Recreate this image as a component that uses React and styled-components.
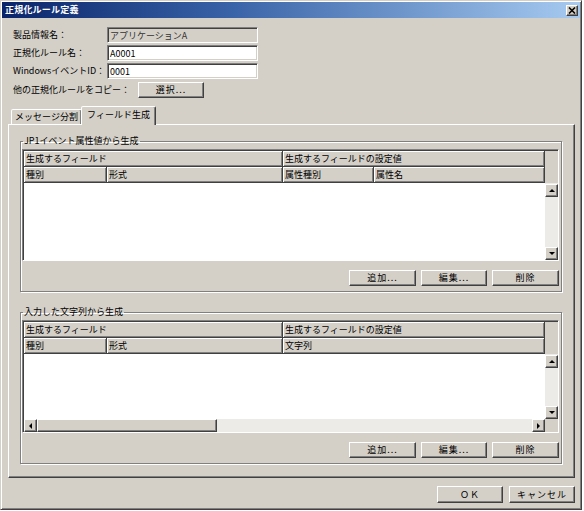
import React from "react";
import styled, { createGlobalStyle } from "styled-components";

const GlobalStyle = createGlobalStyle`
  html, body {
    margin: 0;
    padding: 0;
    background: #ffffff;
  }
  body {
    font-family: "Noto Sans CJK JP", "Noto Sans", sans-serif;
    font-size: 9px;
    line-height: 12px;
    color: #000;
  }
`;

function Arrow({ dir }) {
  const pts = {
    up: "1,5 4,2 7,5",
    down: "1,2 4,5 7,2",
    left: "5,1 2,4 5,7",
    right: "2,1 5,4 2,7",
  }[dir];
  return (
    <svg width="8" height="8" viewBox="0 0 8 8">
      <polygon points={pts} fill="#000" />
    </svg>
  );
}

function CloseIcon() {
  return (
    <svg width="8" height="7" viewBox="0 0 8 7">
      <path d="M1 0.5 L7 6.5 M7 0.5 L1 6.5" stroke="#000" strokeWidth="1.6" />
    </svg>
  );
}

function VScrollBar() {
  return (
    <VScroll>
      <ScrollBtn>
        <Arrow dir="up" />
      </ScrollBtn>
      <ScrollBtn>
        <Arrow dir="down" />
      </ScrollBtn>
    </VScroll>
  );
}

function GridTable({ cols, groups, heads, height, hscroll }) {
  const n = heads.length;
  return (
    <TableBox $h={height}>
      <Grid $cols={cols} $hscroll={hscroll}>
        {groups.map((g) => (
          <HeadCell key={g.label} style={{ gridColumn: `span ${g.span}` }}>
            {g.label}
          </HeadCell>
        ))}
        <Blank />
        {heads.map((h) => (
          <HeadCell key={h}>{h}</HeadCell>
        ))}
        <Blank />
        <Body style={{ gridColumn: `span ${n}` }} />
        <VScrollBar />
        {hscroll && (
          <>
            <HScroll style={{ gridColumn: `span ${n}` }}>
              <ScrollBtn>
                <Arrow dir="left" />
              </ScrollBtn>
              <Thumb />
              <ScrollBtn>
                <Arrow dir="right" />
              </ScrollBtn>
            </HScroll>
            <Blank />
          </>
        )}
      </Grid>
    </TableBox>
  );
}

function EditButtons() {
  return (
    <ButtonRow>
      <Button $w={67}>追加...</Button>
      <Button $w={66}>編集...</Button>
      <Button $w={67}>削除</Button>
    </ButtonRow>
  );
}

export default function App() {
  return (
    <>
      <GlobalStyle />
      <Frame>
        <TitleBar>
          <Title>正規化ルール定義</Title>
          <CloseBox>
            <CloseIcon />
          </CloseBox>
        </TitleBar>
        <Content>
          <Form>
            <Row>
              <Label>製品情報名：</Label>
              <Field $readonly>アプリケーションA</Field>
            </Row>
            <Row>
              <Label>正規化ルール名：</Label>
              <Field>A0001</Field>
            </Row>
            <Row>
              <Label>WindowsイベントID：</Label>
              <Field>0001</Field>
            </Row>
            <Row $h={17}>
              <Label $w={119}>他の正規化ルールをコピー：</Label>
              <Button $w={66}>選択...</Button>
            </Row>
          </Form>
          <TabStrip>
            <Tab $w={71}>メッセージ分割</Tab>
            <Tab $w={75} $active>
              フィールド生成
            </Tab>
          </TabStrip>
          <Panel>
            <Group>
              <Legend>JP1イベント属性値から生成</Legend>
              <GridTable
                height={112}
                cols="83px 176px 91px 1fr 13px"
                groups={[
                  { label: "生成するフィールド", span: 2 },
                  { label: "生成するフィールドの設定値", span: 2 },
                ]}
                heads={["種別", "形式", "属性種別", "属性名"]}
              />
              <EditButtons />
            </Group>
            <Group $top={14}>
              <Legend>入力した文字列から生成</Legend>
              <GridTable
                height={113}
                hscroll
                cols="83px 176px 1fr 13px"
                groups={[
                  { label: "生成するフィールド", span: 2 },
                  { label: "生成するフィールドの設定値", span: 1 },
                ]}
                heads={["種別", "形式", "文字列"]}
              />
              <EditButtons />
            </Group>
          </Panel>
          <Footer>
            <Button $w={66} $h={17}>
              ＯＫ
            </Button>
            <Button $w={66} $h={17}>
              キャンセル
            </Button>
          </Footer>
        </Content>
      </Frame>
    </>
  );
}

const Frame = styled.div`
  box-sizing: border-box;
  width: 582px;
  height: 510px;
  background: #d4d0c8;
  border: 1px solid;
  border-color: #d4d0c8 #404040 #404040 #d4d0c8;
  box-shadow: inset 1px 1px #ffffff, inset -1px -1px #808080;
  padding: 1px;
  display: flex;
  flex-direction: column;
`;

const TitleBar = styled.div`
  height: 16px;
  flex: none;
  display: flex;
  align-items: center;
  justify-content: space-between;
  padding: 0 2px 0 3px;
  background: linear-gradient(90deg, #0a246a 0%, #3a64a8 40%, #a6caf0 100%);
`;

const Title = styled.span`
  color: #ffffff;
  font-weight: 700;
  font-size: 9px;
  letter-spacing: 0.2px;
`;

const CloseBox = styled.div`
  box-sizing: border-box;
  width: 12px;
  height: 11px;
  background: #d4d0c8;
  border: 1px solid;
  border-color: #ffffff #404040 #404040 #ffffff;
  box-shadow: inset -1px -1px #808080;
  display: flex;
  align-items: center;
  justify-content: center;
`;

const Content = styled.div`
  flex: 1;
  display: flex;
  flex-direction: column;
  padding: 0 5px 0 6px;
`;

const Form = styled.div`
  display: flex;
  flex-direction: column;
  gap: 2px;
  margin: 9px 0 0 5px;
`;

const Row = styled.div`
  display: flex;
  align-items: center;
  height: ${(p) => p.$h || 16}px;
`;

const Label = styled.span`
  width: ${(p) => p.$w || 94}px;
  margin-right: ${(p) => (p.$w ? 6 : 0)}px;
  white-space: nowrap;
`;

const Field = styled.div`
  box-sizing: border-box;
  width: 151px;
  height: 16px;
  padding: 1px 2px 0;
  line-height: 13px;
  background: ${(p) => (p.$readonly ? "#d4d0c8" : "#ffffff")};
  color: ${(p) => (p.$readonly ? "#333" : "#000")};
  border: 1px solid;
  border-color: #808080 #ffffff #ffffff #808080;
  box-shadow: inset 1px 1px #404040, inset -1px -1px #d4d0c8;
`;

const Button = styled.div`
  box-sizing: border-box;
  width: ${(p) => p.$w}px;
  height: ${(p) => p.$h || 16}px;
  background: #d4d0c8;
  border: 1px solid;
  border-color: #ffffff #404040 #404040 #ffffff;
  box-shadow: inset -1px -1px #808080;
  display: flex;
  align-items: center;
  justify-content: center;
  letter-spacing: 1px;
  white-space: nowrap;
`;

const TabStrip = styled.div`
  display: flex;
  align-items: flex-end;
  height: 18px;
  margin-top: 8px;
  padding-left: 3px;
  position: relative;
  z-index: 1;
`;

const Tab = styled.div`
  box-sizing: border-box;
  width: ${(p) => p.$w}px;
  height: ${(p) => (p.$active ? 19 : 15)}px;
  margin-bottom: ${(p) => (p.$active ? -1 : 0)}px;
  margin-left: ${(p) => (p.$active ? -1 : 0)}px;
  background: #d4d0c8;
  border: 1px solid;
  border-bottom: none;
  border-color: #ffffff #404040 transparent #ffffff;
  box-shadow: inset -1px 0 #808080;
  border-radius: 2px 2px 0 0;
  display: flex;
  align-items: center;
  justify-content: center;
  padding-bottom: ${(p) => (p.$active ? 2 : 0)}px;
  white-space: nowrap;
`;

const Panel = styled.div`
  box-sizing: border-box;
  height: 354px;
  background: #d4d0c8;
  border: 1px solid;
  border-color: #ffffff #404040 #404040 #ffffff;
  box-shadow: inset -1px -1px #808080;
  padding: 10px 12px 0 11px;
  display: flex;
  flex-direction: column;
`;

const Group = styled.fieldset`
  margin: ${(p) => p.$top || 0}px 0 0 0;
  padding: 2px 2px 5px 1px;
  border: 1px solid #808080;
  box-shadow: inset 1px 1px #ffffff, 1px 1px #ffffff;
  min-width: 0;
`;

const Legend = styled.legend`
  padding: 0 1px;
  margin-left: 1px;
  line-height: 12px;
  font-size: 9px;
`;

const TableBox = styled.div`
  box-sizing: border-box;
  height: ${(p) => p.$h}px;
  border: 1px solid;
  border-color: #808080 #ffffff #ffffff #808080;
  display: flex;
`;

const Grid = styled.div`
  flex: 1;
  display: grid;
  grid-template-columns: ${(p) => p.$cols};
  grid-template-rows: 16px 16px 1fr ${(p) => (p.$hscroll ? "13px" : "")};
  border-top: 1px solid #404040;
  border-left: 1px solid #404040;
  background: #d4d0c8;
`;

const HeadCell = styled.div`
  box-sizing: border-box;
  background: #d4d0c8;
  border-right: 1px solid #404040;
  border-bottom: 1px solid #404040;
  box-shadow: inset 1px 1px #ffffff, inset -1px -1px #808080;
  padding: 1px 0 0 2px;
  line-height: 13px;
  white-space: nowrap;
  overflow: hidden;
`;

const Blank = styled.div`
  background: #d4d0c8;
`;

const Body = styled.div`
  background: #ffffff;
`;

const VScroll = styled.div`
  background: #ecebe7;
  display: flex;
  flex-direction: column;
  justify-content: space-between;
  padding-top: 1px;
`;

const HScroll = styled.div`
  background: #ecebe7;
  display: flex;
  align-items: stretch;
`;

const ScrollBtn = styled.div`
  box-sizing: border-box;
  width: 13px;
  height: 13px;
  flex: none;
  background: #d4d0c8;
  border: 1px solid;
  border-color: #ffffff #404040 #404040 #ffffff;
  box-shadow: inset -1px -1px #808080;
  display: flex;
  align-items: center;
  justify-content: center;
`;

const Thumb = styled.div`
  box-sizing: border-box;
  width: 180px;
  margin-right: auto;
  background: #d4d0c8;
  border: 1px solid;
  border-color: #ffffff #404040 #404040 #ffffff;
  box-shadow: inset -1px -1px #808080;
`;

const ButtonRow = styled.div`
  display: flex;
  justify-content: flex-end;
  gap: 5px;
  margin-top: 9px;
`;

const Footer = styled.div`
  display: flex;
  justify-content: flex-end;
  gap: 6px;
  margin-top: 8px;
`;
